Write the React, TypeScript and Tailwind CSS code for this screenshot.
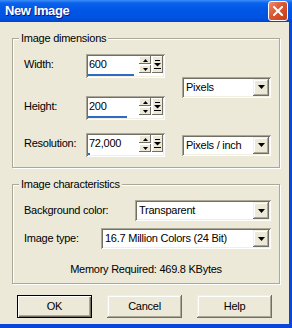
import type { ReactNode } from 'react';

// classic 3D edges (XP colour scheme)
const sunken = 'shadow-[inset_1px_1px_#ACA899,inset_-1px_-1px_#FFFFFF,inset_2px_2px_#716F64,inset_-2px_-2px_#F1EFE2]';
const raised = 'shadow-[inset_-1px_-1px_#716F64,inset_1px_1px_#F1EFE2,inset_-2px_-2px_#ACA899,inset_2px_2px_#FFFFFF]';
const raisedSmall = 'shadow-[inset_-1px_-1px_#716F64,inset_1px_1px_#FFFFFF]';

const DownArrow = () => (
  <svg width="7" height="4" viewBox="0 0 7 4">
    <path d="M0 0h7L3.5 4z" fill="#000" />
  </svg>
);

const Combo = ({ value, className }: { value: string; className: string }) => (
  <div className={`h-[21px] bg-white flex p-[2px] ${sunken} ${className}`}>
    <div className="flex-1 pl-[2px] flex items-center">{value}</div>
    <div className={`w-[16px] bg-[#ECE9D8] flex items-center justify-center ${raised}`}>
      <DownArrow />
    </div>
  </div>
);

const SpinField = ({ value, bar }: { value: string; bar: string }) => (
  <div className={`w-[79px] h-[24px] bg-white flex flex-col pt-[2px] px-[2px] ${sunken}`}>
    <div className="flex h-[17px]">
      <div className="flex-1 flex items-center pl-[1px]">{value}</div>
      <div className="w-[12px] flex flex-col gap-[1px]">
        <div className={`h-[8px] bg-[#ECE9D8] flex items-center justify-center ${raisedSmall}`}>
          <svg width="5" height="3" viewBox="0 0 5 3"><path d="M2.5 0L5 3H0z" fill="#000" /></svg>
        </div>
        <div className={`h-[8px] bg-[#ECE9D8] flex items-center justify-center ${raisedSmall}`}>
          <svg width="5" height="3" viewBox="0 0 5 3"><path d="M0 0h5L2.5 3z" fill="#000" /></svg>
        </div>
      </div>
      <div className={`w-[11px] ml-[1px] bg-[#ECE9D8] flex items-center justify-center ${raisedSmall}`}>
        <svg width="7" height="9" viewBox="0 0 7 9">
          <rect x="1" y="0" width="5" height="1" fill="#000" />
          <path d="M0 3h7L3.5 6.5z" fill="#000" />
          <rect x="0" y="8" width="7" height="1" fill="#000" />
        </svg>
      </div>
    </div>
    <div className="h-[3px] pt-[1px]">
      <div className={`h-[2px] bg-[#316AC5] ${bar}`} />
    </div>
  </div>
);

const SpinRow = ({ label, value, bar }: { label: string; value: string; bar: string }) => (
  <div className="flex items-start">
    <div className="w-[62px] h-[20px] flex items-center">{label}</div>
    <SpinField value={value} bar={bar} />
  </div>
);

const Group = ({ title, className, children }: { title: string; className: string; children: ReactNode }) => (
  <div className={`ml-[12px] w-[268px] border border-[#ACA899] shadow-[inset_1px_1px_#FFFFFF,1px_1px_#FFFFFF] pl-[11px] ${className}`}>
    <div className="-mt-[7px] -ml-[5px] w-fit px-[2px] h-[13px] leading-[13px] bg-[#ECE9D8]">{title}</div>
    {children}
  </div>
);

const Button = ({ label, isDefault }: { label: string; isDefault?: boolean }) => (
  <div
    className={`w-[75px] h-[23px] bg-[#ECE9D8] flex items-center justify-center ${
      isDefault
        ? 'border border-black shadow-[inset_1px_1px_#FFFFFF,inset_-1px_-1px_#716F64,inset_-2px_-2px_#ACA899]'
        : raised
    }`}
  >
    {label}
  </div>
);

export default function App() {
  return (
    <div className="w-[292px] h-[328px] bg-[#0847D8] flex flex-col font-['Liberation_Sans',Arial,sans-serif] text-[11px] tracking-[-0.25px] text-black">
      {/* Title bar */}
      <div className="h-[22px] flex items-center justify-between bg-[linear-gradient(180deg,#3D8DF8_0%,#0A62EC_14%,#0056E6_45%,#0053E0_82%,#0044CC_100%)]">
        <span className="pl-[5px] text-[13px] font-bold tracking-[-0.4px] text-white [text-shadow:1px_1px_#0A1883]">
          New Image
        </span>
        <div className="mr-[4px] w-[20px] h-[20px] rounded-[3px] border border-white bg-[linear-gradient(135deg,#EC8E6E_0%,#DC5634_45%,#C53E17_100%)] flex items-center justify-center">
          <svg width="10" height="10" viewBox="0 0 10 10">
            <path d="M1 1L9 9M9 1L1 9" stroke="#fff" strokeWidth="2" strokeLinecap="square" />
          </svg>
        </div>
      </div>

      {/* Body */}
      <div className="flex-1 mr-[3px] mb-[4px] bg-[#ECE9D8] flex flex-col">
        <Group title="Image dimensions" className="mt-[16px] pb-[10px]">
          <div className="flex items-center mt-[9px]">
            <div className="flex flex-col gap-[18px]">
              <SpinRow label="Width:" value="600" bar="w-[46px]" />
              <SpinRow label="Height:" value="200" bar="w-[39px]" />
            </div>
            <Combo value="Pixels" className="ml-[17px] w-[89px]" />
          </div>
          <div className="flex items-center mt-[13px]">
            <SpinRow label="Resolution:" value="72,000" bar="w-[2px]" />
            <Combo value="Pixels / inch" className="ml-[17px] w-[89px]" />
          </div>
        </Group>

        <Group title="Image characteristics" className="mt-[16px] pb-[7px]">
          <div className="flex items-center mt-[9px]">
            <div className="w-[111px]">Background color:</div>
            <Combo value="Transparent" className="w-[136px]" />
          </div>
          <div className="flex items-center mt-[7px]">
            <div className="w-[77px]">Image type:</div>
            <Combo value="16.7 Million Colors (24 Bit)" className="w-[170px]" />
          </div>
          <div className="mt-[14px] h-[13px] leading-[13px] text-center -ml-[11px]">
            Memory Required: 469.8 KBytes
          </div>
        </Group>

        <div className="flex gap-[15px] ml-[17px] mt-[11px]">
          <Button label="OK" isDefault />
          <Button label="Cancel" />
          <Button label="Help" />
        </div>
      </div>
    </div>
  );
}
